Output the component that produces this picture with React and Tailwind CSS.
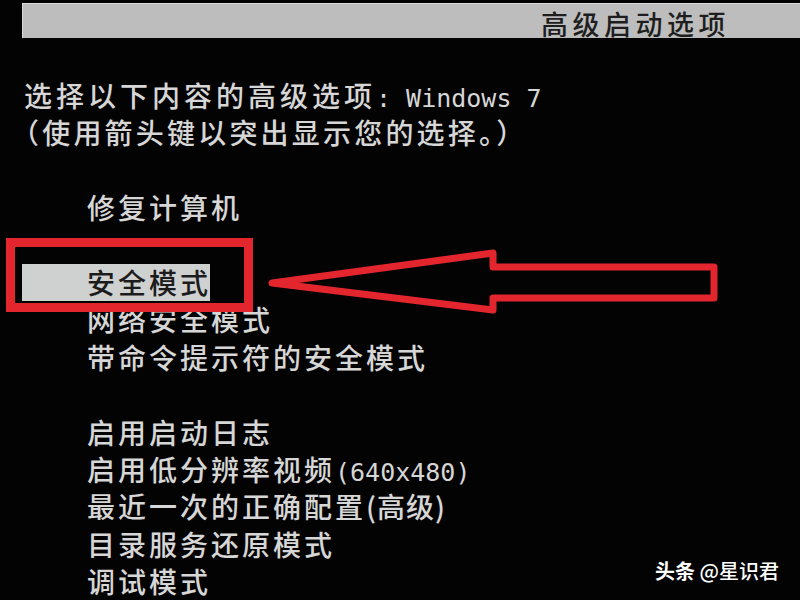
const CJK = { fontFamily: '"Noto Sans CJK SC", "Noto Sans", sans-serif' };

// null = empty row
const ROWS = [
  { text: "修复计算机" },
  null,
  { text: "安全模式", selected: true },
  { text: "网络安全模式" },
  { text: "带命令提示符的安全模式" },
  null,
  { text: "启用启动日志" },
  { text: "启用低分辨率视频", latin: "(640x480)" },
  { text: "最近一次的正确配置", tail: "(高级)" },
  { text: "目录服务还原模式" },
  { text: "调试模式" },
];

function Latin({ children }) {
  return (
    <span className="tracking-normal text-[25px]" style={{ fontFamily: '"DejaVu Sans Mono", "Liberation Mono", monospace' }}>
      {children}
    </span>
  );
}

function MenuRow({ row }) {
  if (!row) return <div className="h-[37.4px]" />;
  if (row.selected) {
    return (
      <div className="h-[37.4px] flex">
        <div className="ml-[22px] w-[188px] pl-[65px] bg-[#cfd1d1] text-[#1c1c1c] whitespace-nowrap">{row.text}</div>
      </div>
    );
  }
  return (
    <div className="h-[37.4px] pl-[87px] whitespace-nowrap">
      {row.text}
      {row.latin && <Latin>{row.latin}</Latin>}
      {row.tail && <span className="tracking-[1px]">{row.tail}</span>}
    </div>
  );
}

function Arrow() {
  return (
    <svg className="absolute left-0 top-0 pointer-events-none" width="800" height="600" viewBox="0 0 800 600">
      <polygon
        points="272,283 493,253 493,267 714,267 714,298 493,298 493,310"
        fill="none"
        stroke="#e3262d"
        strokeWidth="7"
        strokeLinejoin="round"
      />
    </svg>
  );
}

export default function App() {
  return (
    <div className="relative w-[800px] h-[600px] overflow-hidden bg-[#030303] text-[#d6d6d6] font-medium" style={CJK}>
      {/* title bar */}
      <div className="mt-[3px] ml-[22px] h-[35px] bg-[#bdbdbd] border-t border-l border-[#d8d8d8] flex items-center">
        <span className="ml-[518px] mt-[5px] text-[27px] leading-[35px] tracking-[4.5px] text-[#1e1e1e]">高级启动选项</span>
      </div>

      <div className="mt-[39px] text-[28px] leading-[37.4px] tracking-[3px]">
        <div className="h-[37.4px] pl-[24px] whitespace-nowrap tracking-[4px]">
          选择以下内容的高级选项<Latin>: Windows 7</Latin>
        </div>
        <div className="h-[37.4px] pl-[11px] whitespace-nowrap tracking-[3.2px]">（使用箭头键以突出显示您的选择。）</div>
        <div className="h-[37.4px]" />
        {ROWS.map((row, i) => <MenuRow key={i} row={row} />)}
      </div>

      {/* red annotation */}
      <div className="absolute left-[6px] top-[238px] w-[247px] h-[74px] border-[9px] border-[#e3262d]" />
      <Arrow />

      <div className="absolute left-[655px] top-[558px] text-[20px] leading-[26px] text-white whitespace-nowrap">
        <span className="font-bold">头条</span> @星识君
      </div>
    </div>
  );
}
